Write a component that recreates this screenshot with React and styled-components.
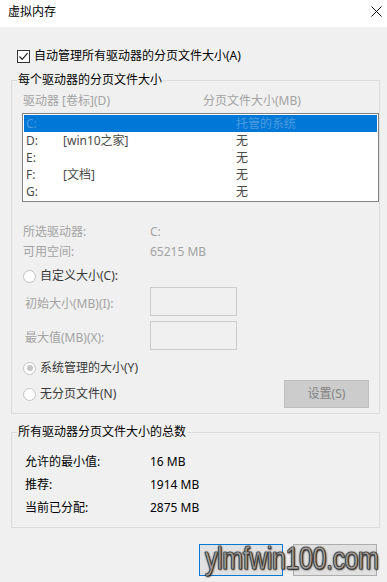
import styled, { createGlobalStyle } from "styled-components";

const GlobalStyle = createGlobalStyle`
  html, body {
    margin: 0;
    padding: 0;
    background: #f0f0f0;
  }
  body {
    font-family: "Noto Sans", "Noto Sans CJK SC", sans-serif;
    font-size: 12px;
    line-height: 16px;
    color: #000;
  }
`;

const drives = [
  { drive: "C:", label: "", size: "托管的系统", selected: true },
  { drive: "D:", label: "[win10之家]", size: "无" },
  { drive: "E:", label: "", size: "无" },
  { drive: "F:", label: "[文档]", size: "无" },
  { drive: "G:", label: "", size: "无" },
];

const totals = [
  { label: "允许的最小值:", value: "16 MB" },
  { label: "推荐:", value: "1914 MB" },
  { label: "当前已分配:", value: "2875 MB" },
];

export default function App() {
  return (
    <>
      <GlobalStyle />
      <Window>
        <TitleBar>
          <Title>虚拟内存</Title>
          <CloseButton>
            <svg width="11" height="11" viewBox="0 0 11 11">
              <path d="M0.5 0.5 L10.5 10.5 M10.5 0.5 L0.5 10.5" stroke="#111" strokeWidth="1" />
            </svg>
          </CloseButton>
        </TitleBar>

        <Body>
          <CheckRow>
            <CheckBox>
              <svg width="11" height="11" viewBox="0 0 11 11">
                <path d="M1.5 5.5 L4.2 8.3 L9.6 2.2" fill="none" stroke="#222" strokeWidth="1.2" />
              </svg>
            </CheckBox>
            自动管理所有驱动器的分页文件大小(A)
          </CheckRow>

          <Group $mt={8}>
            <Legend>每个驱动器的分页文件大小</Legend>
            <GroupContent $pt={5} $pb={5} $pr={0}>
              <HeaderRow>
                <HeaderCell $w={180}>驱动器 [卷标](D)</HeaderCell>
                <HeaderCell>分页文件大小(MB)</HeaderCell>
              </HeaderRow>
              <ListBox>
                {drives.map((d) => (
                  <ListRow key={d.drive} $selected={d.selected}>
                    <DriveCell>{d.drive}</DriveCell>
                    <LabelCell>{d.label}</LabelCell>
                    <span>{d.size}</span>
                  </ListRow>
                ))}
              </ListBox>

              <InfoRow $mt={22}>
                <InfoLabel>所选驱动器:</InfoLabel>
                <span>C:</span>
              </InfoRow>
              <InfoRow $mt={4}>
                <InfoLabel>可用空间:</InfoLabel>
                <span>65215 MB</span>
              </InfoRow>

              <RadioRow $mt={8}>
                <Radio />
                自定义大小(C):
              </RadioRow>
              <FieldRow $mt={3}>
                <FieldLabel>初始大小(MB)(I):</FieldLabel>
                <TextBox />
              </FieldRow>
              <FieldRow $mt={5}>
                <FieldLabel>最大值(MB)(X):</FieldLabel>
                <TextBox />
              </FieldRow>

              <RadioRow $mt={10}>
                <Radio $checked />
                系统管理的大小(Y)
              </RadioRow>
              <LastRow>
                <RadioRow>
                  <Radio />
                  无分页文件(N)
                </RadioRow>
                <SetButton>设置(S)</SetButton>
              </LastRow>
            </GroupContent>
          </Group>

          <Group $mt={10}>
            <Legend>所有驱动器分页文件大小的总数</Legend>
            <GroupContent $pt={10} $pb={8} $pr={10}>
              {totals.map((t) => (
                <TotalRow key={t.label}>
                  <TotalLabel>{t.label}</TotalLabel>
                  <span>{t.value}</span>
                </TotalRow>
              ))}
            </GroupContent>
          </Group>

          <ButtonBar>
            <DialogButton $focused />
            <DialogButton />
            <Watermark>ylmfwin100.com</Watermark>
          </ButtonBar>
        </Body>
      </Window>
    </>
  );
}

const Window = styled.div`
  width: 387px;
  height: 582px;
  display: flex;
  flex-direction: column;
  background: #f0f0f0;
  overflow: hidden;
`;

const TitleBar = styled.div`
  height: 27px;
  flex-shrink: 0;
  background: #fff;
  display: flex;
  align-items: center;
  justify-content: space-between;
  padding: 0 5px 0 8px;
`;

const Title = styled.div`
  font-size: 12px;
  color: #000;
  margin-top: -3px;
`;

const CloseButton = styled.div`
  width: 11px;
  height: 11px;
  display: flex;
  margin-top: -4px;
`;

const Body = styled.div`
  display: flex;
  flex-direction: column;
  padding: 0 7px 0 11px;
`;

const CheckRow = styled.div`
  display: flex;
  align-items: center;
  gap: 4px;
  margin-top: 21px;
  padding-left: 6px;
  height: 16px;
`;

const CheckBox = styled.div`
  width: 11px;
  height: 11px;
  border: 1px solid #333;
  background: #fff;
  display: flex;
`;

const Group = styled.fieldset`
  margin: ${({ $mt }) => $mt}px 0 0 0;
  padding: 0;
  border: 1px solid #dcdcdc;
  min-width: 0;
`;

const Legend = styled.legend`
  margin-left: 5px;
  padding: 0 1px;
  line-height: 16px;
  color: #000;
`;

const GroupContent = styled.div`
  display: flex;
  flex-direction: column;
  padding: ${({ $pt, $pb, $pr }) => `${$pt}px ${$pr}px ${$pb}px 10px`};
`;

const HeaderRow = styled.div`
  display: flex;
  padding-left: 1px;
  height: 16px;
`;

const HeaderCell = styled.span`
  width: ${({ $w }) => ($w ? `${$w}px` : "auto")};
  color: #a3a3a3;
`;

const ListBox = styled.div`
  margin-top: 4px;
  border: 1px solid #828282;
  background: #fff;
  padding: 1px;
  display: flex;
  flex-direction: column;
`;

const ListRow = styled.div`
  height: 17px;
  display: flex;
  align-items: center;
  padding-left: 2px;
  background: ${({ $selected }) => ($selected ? "#0078d7" : "transparent")};
  color: ${({ $selected }) => ($selected ? "#4d9ae0" : "#4a4a4a")};
`;

const DriveCell = styled.span`
  width: 37px;
`;

const LabelCell = styled.span`
  width: 173px;
`;

const InfoRow = styled.div`
  display: flex;
  height: 16px;
  padding-left: 1px;
  margin-top: ${({ $mt }) => $mt}px;
  color: #a3a3a3;
`;

const InfoLabel = styled.span`
  width: 127px;
`;

const RadioRow = styled.div`
  display: flex;
  align-items: center;
  gap: 4px;
  height: 16px;
  padding-left: 1px;
  margin-top: ${({ $mt }) => $mt || 0}px;
  color: #3a3a3a;
`;

const Radio = styled.span`
  width: 11px;
  height: 11px;
  border-radius: 50%;
  border: 1px solid #c4c4c4;
  background: #fff;
  display: flex;
  align-items: center;
  justify-content: center;

  &::after {
    content: "";
    display: ${({ $checked }) => ($checked ? "block" : "none")};
    width: 6px;
    height: 6px;
    border-radius: 50%;
    background: #c4c4c4;
  }
`;

const FieldRow = styled.div`
  display: flex;
  align-items: center;
  margin-top: ${({ $mt }) => $mt}px;
  padding-left: 3px;
`;

const FieldLabel = styled.span`
  width: 125px;
  color: #a3a3a3;
  padding-top: 4px;
`;

const TextBox = styled.div`
  width: 85px;
  height: 27px;
  border: 1px solid #cccccc;
  background: #f0f0f0;
`;

const LastRow = styled.div`
  display: flex;
  align-items: center;
  justify-content: space-between;
  margin-top: 4px;
  padding-right: 10px;
`;

const SetButton = styled.div`
  width: 83px;
  height: 26px;
  border: 1px solid #bfbfbf;
  background: #cccccc;
  color: #838383;
  display: flex;
  align-items: center;
  justify-content: center;
`;

const TotalRow = styled.div`
  display: flex;
  align-items: center;
  height: 23px;
  padding-left: 3px;
`;

const TotalLabel = styled.span`
  width: 125px;
`;

const ButtonBar = styled.div`
  position: relative;
  display: flex;
  justify-content: flex-end;
  gap: 10px;
  margin-top: 16px;
  padding-right: 3px;
`;

const DialogButton = styled.div`
  width: 82px;
  height: 30px;
  border: 1px solid ${({ $focused }) => ($focused ? "#0078d7" : "#adadad")};
  background: #e1e1e1;
`;

const Watermark = styled.div`
  position: absolute;
  left: 194px;
  top: -4px;
  font-family: "Liberation Sans", Arial, sans-serif;
  font-size: 32px;
  line-height: 36px;
  letter-spacing: -0.5px;
  color: #a49f9c;
  transform: scaleX(0.78);
  transform-origin: left center;
  -webkit-text-stroke: 0.6px #3a3a3a;
  text-shadow: 0 0 1px #000, 0 0 2px #000, 1px 1px 2px #222;
  white-space: nowrap;
`;
